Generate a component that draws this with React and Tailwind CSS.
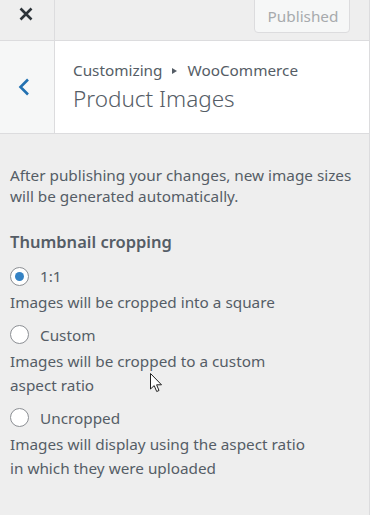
function Radio({ checked }) {
  return (
    <span className="w-[19px] h-[19px] rounded-full border border-[#8c8f94] bg-white flex items-center justify-center shrink-0">
      {checked && <span className="w-[9px] h-[9px] rounded-full bg-[#3582c4]" />}
    </span>
  );
}

function Option({ label, lines, checked, first }) {
  return (
    <div className={first ? "mt-[12px]" : "mt-[9px]"}>
      <div className="h-[22px] flex items-center">
        <Radio checked={checked} />
        <span className="ml-[11px] leading-[22px]">{label}</span>
      </div>
      <div className="mt-[3px] leading-[24.5px]">
        {lines.map((l) => (
          <div key={l} className="whitespace-nowrap">{l}</div>
        ))}
      </div>
    </div>
  );
}

export default function App() {
  return (
    <div className="w-[374px] h-[515px] bg-white flex font-['Noto_Sans',sans-serif] text-[15.3px] text-[#555d66] relative overflow-hidden">
      <div className="w-[370px] h-full border-r border-[#dcdcde] bg-[#eeeeee] flex flex-col">
        {/* top header */}
        <div className="h-[41px] border-b border-[#dcdcde] flex shrink-0">
          <div className="w-[55px] h-full border-r border-[#dcdcde] flex justify-center pt-[7px] pr-[3px]">
            <svg width="14" height="14" viewBox="0 0 14 14">
              <path d="M1.5 1.5 L12.5 12.5 M12.5 1.5 L1.5 12.5" stroke="#2c3338" strokeWidth="2.6" strokeLinecap="butt" />
            </svg>
          </div>
          <div className="flex-1 flex justify-end pr-[19px]">
            <div className="w-[96px] h-[34px] -mt-[1px] border border-[#dcdcde] rounded-b-[4px] bg-[#f6f7f7] text-[#a7aaad] flex items-center justify-center pl-[2px]">
              Published
            </div>
          </div>
        </div>
        {/* section title */}
        <div className="h-[93px] border-b border-[#dcdcde] bg-white flex shrink-0">
          <div className="w-[55px] h-full border-r border-[#dcdcde] bg-[#f6f7f7] flex items-center justify-center pr-[6px]">
            <svg width="12" height="18" viewBox="0 0 12 18">
              <path d="M10 1.5 L2.5 9 L10 16.5" fill="none" stroke="#2271b1" strokeWidth="2.6" />
            </svg>
          </div>
          <div className="pl-[18px] pt-[19px]">
            <div className="h-[20px] leading-[20px] flex items-center whitespace-nowrap">
              <span>Customizing</span>
              <svg width="5" height="6" viewBox="0 0 5 6" className="mx-[10px] mt-[2px]">
                <polygon points="0,0 5,3 0,6" fill="#555d66" />
              </svg>
              <span>WooCommerce</span>
            </div>
            <div className="mt-[4px] text-[22.5px] leading-[30px] font-light whitespace-nowrap">Product Images</div>
          </div>
        </div>
        {/* body */}
        <div className="px-[10px] pt-[31px]">
          <div className="leading-[21px]">
            <div className="whitespace-nowrap">After publishing your changes, new image sizes</div>
            <div className="whitespace-nowrap">will be generated automatically.</div>
          </div>
          <div className="mt-[24px] text-[16.5px] font-semibold leading-[22px]">Thumbnail cropping</div>
          <Option first checked label="1:1" lines={["Images will be cropped into a square"]} />
          <Option label="Custom" lines={["Images will be cropped to a custom", "aspect ratio"]} />
          <Option label="Uncropped" lines={["Images will display using the aspect ratio", "in which they were uploaded"]} />
        </div>
      </div>
      {/* mouse cursor */}
      <svg className="absolute left-[150px] top-[373px]" width="13" height="20" viewBox="0 0 13 20">
        <path d="M0.5 0.5 L0.5 16 L4.2 12.6 L6.7 18.5 L9 17.5 L6.6 11.8 L11.5 11.8 Z" fill="white" stroke="#222" strokeWidth="1" strokeLinejoin="miter" />
      </svg>
    </div>
  );
}
